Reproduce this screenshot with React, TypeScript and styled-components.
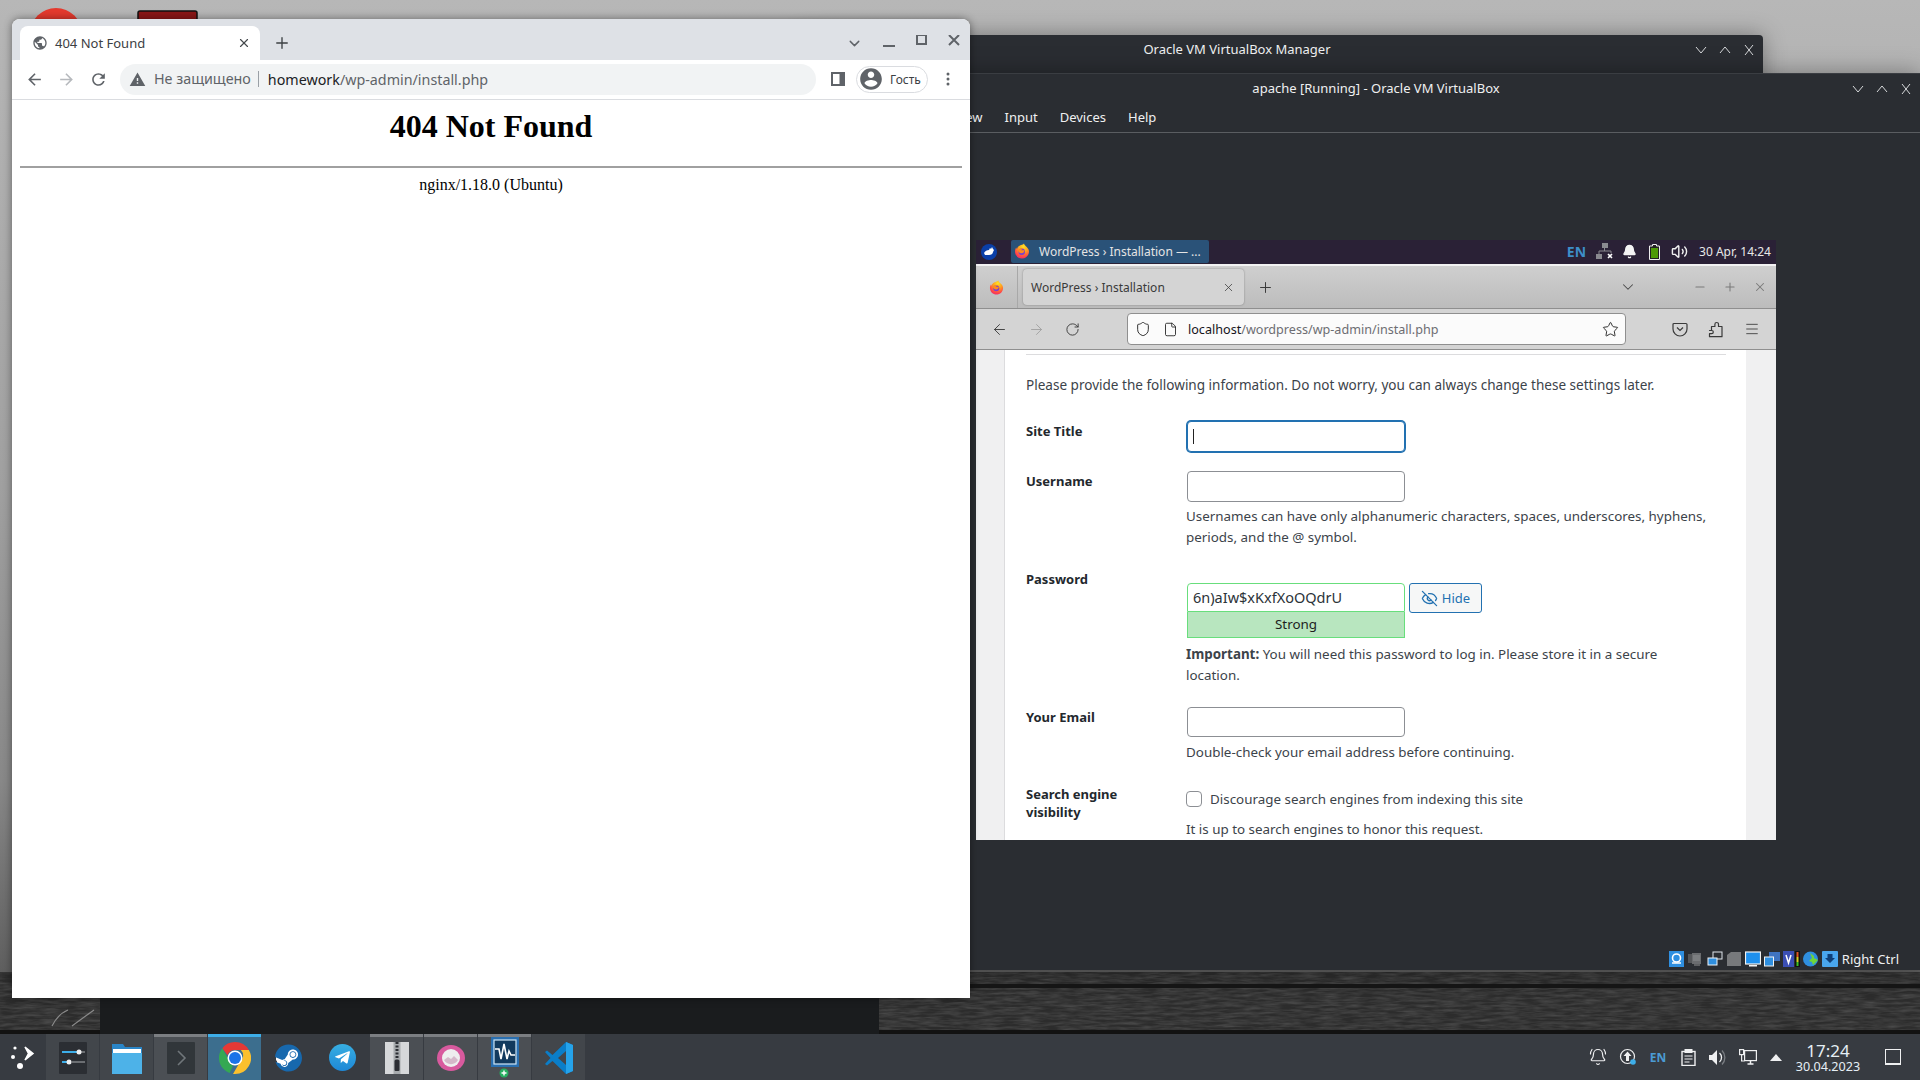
import React from "react";
import styled, { createGlobalStyle } from "styled-components";
import { ArrowLeft, ArrowRight, RotateCw, Shield, File, Star, Menu, EyeOff, X, Plus, ChevronDown, Minus, Bell, Volume2, BellRing } from "lucide-react";
import { FaSteam, FaTelegramPlane } from "react-icons/fa";

const Global = createGlobalStyle`
  html, body { margin: 0; padding: 0; width: 1920px; height: 1080px; overflow: hidden; background: #333; }
  * { box-sizing: border-box; }
`;

const UI = `"Noto Sans", "Liberation Sans", sans-serif`;

const Desktop = styled.div`
  position: relative;
  width: 1920px;
  height: 1080px;
  display: flex;
  flex-direction: column;
  font-family: ${UI};
  overflow: hidden;
`;
const Workspace = styled.div`
  position: relative;
  flex: 1;
`;
const WallpaperArt = styled.svg`
  position: absolute;
  inset: 0;
  display: block;
`;
const BackWindow = styled.div`
  position: absolute;
  left: 100px;
  top: 900px;
  width: 779px;
  height: 134px;
  background: #1a1c1e;
`;

/* ---------- dark KDE windows ---------- */
const ManagerWindow = styled.div`
  position: absolute;
  left: 800px;
  top: 35px;
  width: 963px;
  height: 120px;
  background: #2a2d32;
  border-radius: 4px 4px 0 0;
  box-shadow: 0 0 22px rgba(0, 0, 0, 0.35);
`;
const DarkTitle = styled.div<{ $left?: number; $right?: number; $h: number }>`
  position: relative;
  height: ${(p) => p.$h}px;
  flex: none;
  display: flex;
  align-items: center;
  justify-content: center;
  padding-left: ${(p) => p.$left ?? 0}px;
  padding-right: ${(p) => p.$right ?? 0}px;
  color: #eff0f1;
  font-size: 13px;
`;
const WinButtons = styled.div`
  position: absolute;
  right: 6px;
  top: 7px;
  display: flex;
  gap: 10px;
`;
const VBoxWindow = styled.div`
  position: absolute;
  left: 800px;
  top: 73px;
  width: 1120px;
  height: 897px;
  background: #2a2d32;
  border-top: 1px solid #3a3d42;
  display: flex;
  flex-direction: column;
  box-shadow: 0 0 22px rgba(0, 0, 0, 0.35);
`;
const MenuBar = styled.div`
  height: 31px;
  display: flex;
  align-items: center;
  gap: 22px;
  padding-left: 80px;
  color: #eff0f1;
  font-size: 13px;
  border-bottom: 1px solid #5a5d61;
  flex: none;
  box-sizing: content-box;
`;
const GuestScreen = styled.div`
  width: 800px;
  height: 600px;
  margin: 107px 0 0 176px;
  flex: none;
  display: flex;
  flex-direction: column;
  overflow: hidden;
  font-family: ${UI};
`;
const StatusBar = styled.div`
  margin-top: auto;
  height: 22px;
  padding-right: 21px;
  display: flex;
  align-items: center;
  justify-content: flex-end;
  gap: 3px;
  color: #eff0f1;
  font-size: 13px;
  flex: none;
`;
const StatusBarEnd = styled.span`
  margin-left: 1px;
`;

/* ---------- guest XFCE panel ---------- */
const GuestPanel = styled.div`
  height: 26px;
  background: #2a2136;
  border-bottom: 2px solid #f2f2f2;
  display: flex;
  align-items: flex-start;
  color: #e8e8e8;
  font-size: 12px;
  flex: none;
`;
const PanelMenuIcon = styled.div`
  width: 35px;
  height: 23px;
  display: flex;
  align-items: center;
  padding-left: 5px;
`;
const TaskButton = styled.div`
  width: 198px;
  height: 23px;
  background: #2a5278;
  border-radius: 2px;
  display: flex;
  align-items: center;
  gap: 9px;
  padding: 0 0 1px 3px;
  white-space: nowrap;
  color: #e4e4e4;
`;
const PanelTray = styled.div`
  margin-left: auto;
  height: 23px;
  display: flex;
  align-items: center;
  padding-right: 5px;
`;
const PanelLang = styled.span`
  color: #3d8fc9;
  font-weight: 700;
  font-size: 14px;
  margin-right: 6px;
`;
const PanelGlyph = styled.span`
  width: 25px;
  display: flex;
  justify-content: center;
`;
const PanelClock = styled.span`
  margin-left: 7px;
  font-size: 12px;
  padding-bottom: 1px;
`;

/* ---------- guest firefox ---------- */
const FoxTabs = styled.div`
  height: 43px;
  flex: none;
  background: linear-gradient(#cfcfcf, #bcbcbc);
  border-bottom: 1px solid #8f8f8f;
  display: flex;
  color: #3a3a3a;
  align-items: center;
`;
const FoxLogoCell = styled.div`
  width: 42px;
  height: 100%;
  display: flex;
  align-items: center;
  justify-content: center;
  border-right: 1px solid #a8a8a8;
`;
const FoxTab = styled.div`
  width: 221px;
  height: 36px;
  margin-left: 5px;
  padding: 0 9px 0 8px;
  background: #d4d4d4;
  border-radius: 4px;
  box-shadow: 0 0 2px rgba(0, 0, 0, 0.35);
  display: flex;
  align-items: center;
  justify-content: space-between;
  font-size: 12px;
`;
const FoxTabPlus = styled.div`
  margin-left: 13px;
  display: flex;
`;
const FoxControls = styled.div`
  margin-left: auto;
  display: flex;
  align-items: center;
  padding-right: 9px;
  gap: 16px;
  color: #7a7a7a;
`;
const FoxChevron = styled.span`
  display: flex;
  margin-right: 40px;
  color: #4a4a4a;
`;
const FoxNav = styled.div`
  height: 41px;
  flex: none;
  background: #d4d4d4;
  border-bottom: 1px solid #8f8f8f;
  display: flex;
  align-items: center;
  color: #3a3a3a;
`;
const FoxNavBtn = styled.span<{ $w: number; $dim?: boolean }>`
  width: ${(p) => p.$w}px;
  display: flex;
  justify-content: center;
  color: ${(p) => (p.$dim ? "#a0a0a0" : "#3a3a3a")};
`;
const FoxUrl = styled.div`
  width: 499px;
  height: 32px;
  margin-left: 32px;
  margin-right: 36px;
  background: #fbfbfb;
  border: 1px solid #8f8f8f;
  border-radius: 4px;
  display: flex;
  align-items: center;
  padding: 0 6px 0 7px;
  font-size: 12.6px;
`;
const FoxUrlIcons = styled.span`
  display: flex;
  align-items: center;
  gap: 12px;
  margin-right: 10px;
`;
const FoxHost = styled.span`
  color: #15141a;
`;
const FoxPath = styled.span`
  color: #6d6d72;
`;
const FoxStar = styled.span`
  margin-left: auto;
  display: flex;
`;

/* ---------- wordpress page ---------- */
const WpPage = styled.div`
  flex: 1;
  min-height: 0;
  background: #f0f0f1;
  padding: 0 30px 0 29px;
  overflow: hidden;
`;
const WpCard = styled.div`
  background: #fff;
  height: 100%;
  padding: 4px 20px 0 21px;
  box-shadow: -1px 0 0 #dcdcde;
  color: #3c434a;
  font-size: 13.4px;
  line-height: 21px;
`;
const WpRule = styled.div`
  height: 1px;
  background: #dcdcde;
`;
const WpIntro = styled.p`
  margin: 20px 0 0;
  line-height: 20px;
  font-size: 13.55px;
`;
const FormRow = styled.div<{ $mt: number }>`
  margin-top: ${(p) => p.$mt}px;
  display: grid;
  grid-template-columns: 160px 1fr;
`;
const FieldLabel = styled.div`
  font-weight: 700;
  font-size: 13px;
  color: #23282d;
  line-height: 20px;
`;
const FieldLabelTall = styled(FieldLabel)`
  line-height: 18px;
`;
const TextBox = styled.div<{ $h: number; $focus?: boolean }>`
  width: 218px;
  margin-left: 1px;
  height: ${(p) => p.$h}px;
  border: 1px solid ${(p) => (p.$focus ? "#2271b1" : "#8c8f94")};
  box-shadow: ${(p) => (p.$focus ? "0 0 0 1px #2271b1" : "none")};
  border-radius: 4px;
  background: #fff;
  display: flex;
  align-items: center;
  padding-left: 5px;
`;
const Caret = styled.span`
  width: 1px;
  height: 15px;
  background: #222;
`;
const Hint = styled.div<{ $mt: number }>`
  margin-top: ${(p) => p.$mt}px;
`;
const PasswordLine = styled.div`
  margin-top: 14px;
  margin-left: 1px;
  display: flex;
  gap: 4px;
`;
const PasswordStack = styled.div`
  width: 218px;
`;
const PasswordBox = styled.div`
  height: 29px;
  border: 1px solid #68de7c;
  border-radius: 4px 4px 0 0;
  padding-left: 5px;
  display: flex;
  align-items: center;
  font-size: 14.5px;
  color: #2c3338;
  background: #fff;
`;
const StrengthBar = styled.div`
  height: 26px;
  background: #b8e6bf;
  border: 1px solid #68de7c;
  border-top: none;
  display: flex;
  align-items: center;
  justify-content: center;
  color: #1e1e1e;
`;
const HideButton = styled.div`
  width: 73px;
  height: 30px;
  border: 1px solid #2271b1;
  border-radius: 3px;
  background: #f6f7f7;
  color: #2271b1;
  display: flex;
  align-items: center;
  justify-content: center;
  gap: 4px;
  font-size: 13px;
`;
const CheckLine = styled.div`
  display: flex;
  align-items: center;
  gap: 8px;
  padding-top: 4px;
  height: 24px;
`;
const CheckBox = styled.span`
  width: 16px;
  height: 16px;
  border: 1px solid #8c8f94;
  border-radius: 4px;
  background: #fff;
`;

/* ---------- chrome ---------- */
const ChromeWindow = styled.div`
  position: absolute;
  left: 12px;
  top: 19px;
  width: 958px;
  height: 979px;
  display: flex;
  flex-direction: column;
  background: #fff;
  border-radius: 8px 8px 0 0;
  box-shadow: 0 0 8px rgba(0, 0, 0, 0.45);
`;
const ChromeStrip = styled.div`
  height: 41px;
  flex: none;
  background: #dee1e6;
  border-radius: 8px 8px 0 0;
  padding: 7px 0 0 8px;
  display: flex;
  color: #3c4043;
`;
const ChromeTab = styled.div`
  width: 240px;
  height: 34px;
  background: #fff;
  border-radius: 8px 8px 0 0;
  display: flex;
  align-items: center;
  padding: 0 9px 0 12px;
  font-size: 13px;
  gap: 7px;
`;
const ChromeTabTitle = styled.span`
  flex: 1;
  color: #3c4043;
`;
const ChromePlus = styled.div`
  margin: 0 0 0 13px;
  height: 34px;
  display: flex;
  align-items: center;
`;
const ChromeControls = styled.div`
  margin-left: auto;
  height: 34px;
  display: flex;
  align-items: center;
  color: #5f6368;
`;
const ControlCell = styled.span<{ $w: number }>`
  width: ${(p) => p.$w}px;
  display: flex;
  justify-content: center;
`;
const ChromeBar = styled.div`
  height: 40px;
  flex: none;
  border-bottom: 1px solid #dadce0;
  display: flex;
  align-items: center;
  color: #5f6368;
  padding-bottom: 1px;
`;
const ChromeNavBtn = styled.span<{ $w: number; $dim?: boolean }>`
  width: ${(p) => p.$w}px;
  display: flex;
  justify-content: center;
  color: ${(p) => (p.$dim ? "#b6b9bd" : "#5f6368")};
`;
const Omnibox = styled.div`
  width: 696px;
  height: 31px;
  background: #f1f3f4;
  border-radius: 16px;
  display: flex;
  align-items: center;
  padding-left: 9px;
  font-size: 14.3px;
  color: #5f6368;
`;
const OmniLabel = styled.span`
  margin-left: 8px;
  padding-right: 7px;
  border-right: 1px solid #9aa0a6;
  line-height: 16px;
`;
const OmniHost = styled.span`
  margin-left: 9px;
  color: #202124;
`;
const OmniPath = styled.span`
  color: #5f6368;
`;
const SidePanelIcon = styled.span`
  margin-left: 15px;
  display: flex;
`;
const ProfilePill = styled.div`
  width: 72px;
  height: 27px;
  margin-left: 11px;
  border: 1px solid #dadce0;
  border-radius: 14px;
  display: flex;
  align-items: center;
  gap: 6px;
  padding-left: 1px;
  font-size: 12px;
  color: #3c4043;
`;
const DotsCell = styled.span`
  margin-left: 17px;
  display: flex;
`;
const ChromePage = styled.div`
  flex: 1;
  padding: 8px 8px 0;
  font-family: "Liberation Serif", "Times New Roman", serif;
  color: #000;
  text-align: center;
`;
const NotFoundTitle = styled.h1`
  margin: 0;
  font-size: 32px;
  line-height: 37px;
  font-weight: 700;
`;
const PageRule = styled.hr`
  margin: 21px 0 8px;
  border: none;
  height: 2px;
  background: #a0a0a0;
`;
const ServerLine = styled.div`
  font-size: 16px;
  line-height: 18px;
`;

/* ---------- taskbar ---------- */
const Taskbar = styled.div`
  height: 46px;
  flex: none;
  position: relative;
  background: #373b41;
  display: flex;
  align-items: stretch;
  gap: 1px;
`;
const Launcher = styled.div`
  width: 45px;
  display: flex;
  align-items: center;
  justify-content: center;
`;
type TaskState = "idle" | "hover" | "running" | "active";
const taskBg: Record<TaskState, string> = {
  idle: "transparent",
  hover: "#42464b",
  running: "#4b4f54",
  active: "#3c6e8e",
};
const taskTop: Record<TaskState, string> = {
  idle: "transparent",
  hover: "transparent",
  running: "#7b7e82",
  active: "#3daee9",
};
const TaskItem = styled.div<{ $state: TaskState }>`
  width: 53px;
  background: ${(p) => taskBg[p.$state]};
  border-top: 3px solid ${(p) => taskTop[p.$state]};
  display: flex;
  align-items: center;
  justify-content: center;
  padding-bottom: 2px;
`;
const Tray = styled.div`
  margin-left: auto;
  display: flex;
  align-items: center;
  padding-right: 14px;
  color: #eff0f1;
`;
const TrayCell = styled.span<{ $w: number }>`
  width: ${(p) => p.$w}px;
  display: flex;
  justify-content: center;
  align-items: center;
`;
const TrayLang = styled.span`
  color: #4b9bd4;
  font-size: 12px;
  font-weight: 700;
`;
const Clock = styled.div`
  width: 78px;
  display: flex;
  flex-direction: column;
  align-items: center;
  color: #e6eff5;
  margin-right: 13px;
  padding-top: 1px;
`;
const ClockTime = styled.span`
  font-size: 17px;
  line-height: 18px;
`;
const ClockDate = styled.span`
  font-size: 12.6px;
  line-height: 14px;
`;
const ShowDesktop = styled.span`
  width: 16px;
  height: 16px;
  margin: 0 5px;
  border: 1px solid #eff0f1;
  border-bottom-width: 2px;
`;
const SteamBadge = styled.span`
  width: 27px;
  height: 30px;
  display: flex;
  align-items: center;
  justify-content: center;
  color: #1768ad;
  border-radius: 50%;
  background: radial-gradient(circle, #fff 60%, transparent 62%);
`;
const TelegramBadge = styled.span`
  width: 27px;
  height: 27px;
  border-radius: 50%;
  background: linear-gradient(#37aee2, #1e88d6);
  display: flex;
  align-items: center;
  justify-content: center;
  color: #fff;
`;

/* ---------- drawn icons ---------- */
const M = ({ d, s = 18, c = "currentColor" }: { d: string; s?: number; c?: string }) => (
  <svg width={s} height={s} viewBox="0 0 24 24" fill={c}><path d={d} /></svg>
);
const GLOBE = "M12 2C6.48 2 2 6.48 2 12s4.48 10 10 10 10-4.48 10-10S17.52 2 12 2zm-1 17.93c-3.95-.49-7-3.85-7-7.93 0-.62.08-1.21.21-1.79L9 15v1c0 1.1.9 2 2 2v1.93zm6.9-2.54c-.26-.81-1-1.39-1.9-1.39h-1v-3c0-.55-.45-1-1-1H8v-2h2c.55 0 1-.45 1-1V7h2c1.1 0 2-.9 2-2v-.41c2.93 1.19 5 4.06 5 7.41 0 2.08-.8 3.97-2.1 5.39z";
const BACK = "M20 11H7.83l5.59-5.59L12 4l-8 8 8 8 1.41-1.41L7.83 13H20v-2z";
const FWD = "M12 4l-1.41 1.41L16.17 11H4v2h12.17l-5.58 5.59L12 20l8-8z";
const REFRESH = "M17.65 6.35C16.2 4.9 14.21 4 12 4c-4.42 0-7.99 3.58-7.99 8s3.57 8 7.99 8c3.73 0 6.84-2.55 7.73-6h-2.08c-.82 2.33-3.04 4-5.65 4-3.31 0-6-2.69-6-6s2.69-6 6-6c1.66 0 3.14.69 4.22 1.78L13 11h7V4l-2.35 2.35z";
const WARN = "M1 21h22L12 2 1 21zm12-3h-2v-2h2v2zm0-4h-2v-4h2v4z";
const ACCOUNT = "M12 2C6.48 2 2 6.48 2 12s4.48 10 10 10 10-4.48 10-10S17.52 2 12 2zm0 3c1.66 0 3 1.34 3 3s-1.34 3-3 3-3-1.34-3-3 1.34-3 3-3zm0 14.2c-2.5 0-4.71-1.28-6-3.22.03-1.99 4-3.08 6-3.08 1.99 0 5.97 1.09 6 3.08-1.29 1.94-3.5 3.22-6 3.22z";

const DarkBtns = () => (
  <svg width="62" height="16" viewBox="0 0 62 16" fill="none" stroke="#d8dadc" strokeWidth="1">
    <path d="M1 5l5 6 5-6" />
    <path d="M25 11l5-6 5 6" />
    <path d="M50 3l8 10M58 3l-8 10" />
  </svg>
);

const FirefoxLogo = ({ s = 16 }: { s?: number }) => (
  <svg width={s} height={s} viewBox="0 0 32 32">
    <defs>
      <radialGradient id={`ff${s}`} cx="0.6" cy="0.2" r="0.95">
        <stop offset="0" stopColor="#ffe226" />
        <stop offset="0.4" stopColor="#ff9a1f" />
        <stop offset="0.75" stopColor="#ff3d4f" />
        <stop offset="1" stopColor="#d62a8c" />
      </radialGradient>
    </defs>
    <path d="M20 1c.5 3 3 4.500 5.500 7 3 3 4.500 6 4.500 9 0 8-6.300 14-14 14S2 25 2 17c0-3 1-6 2.500-8 0 1 .5 2 1.500 3 .5-3 2.500-5 5-6.500C15 3.500 18 3 20 1z" fill={`url(#ff${s})`} />
    <circle cx="15.500" cy="17.500" r="6.500" fill="#7a3fcf" />
    <path d="M8 15c3-4 8-5 12-3-3 0-5 1-5.500 2.500 3 .5 5 0 6.500-.5 0 4-3 6.500-6 6.500-3.500 0-6-2.500-7-5.500z" fill="#ff8c1a" />
  </svg>
);

const WhiskerIcon = () => (
  <svg width="16" height="16" viewBox="0 0 16 16">
    <circle cx="8" cy="8" r="8" fill="#0a3fa8" />
    <path d="M3 9c1-2 3-3 5-3l1-2 1 1 1-2 1 2 1 1-1 2c0 2-2 3-4 3H6L4 11z" fill="#fff" />
  </svg>
);

const ChromeLogo = () => (
  <svg width="32" height="32" viewBox="0 0 32 32">
    <path d="M16 0a16 16 0 0 1 13.860 8H16a8 8 0 0 0-7.500 5.200L3.300 6.200A16 16 0 0 1 16 0z" fill="#e53935" />
    <path d="M1.400 9.200l1.900-3L9.300 17a8 8 0 0 0 4.700 6.700L10.700 31A16 16 0 0 1 1.400 9.200z" fill="#34a853" />
    <path d="M29.860 8A16 16 0 0 1 16 32h-2l6.900-12a8 8 0 0 0 1-12z" fill="#fbc02d" />
    <circle cx="16" cy="16" r="7.500" fill="#fff" />
    <circle cx="16" cy="16" r="6" fill="#1a73e8" />
  </svg>
);

const SettingsIcon = () => (
  <svg width="28" height="32" viewBox="0 0 28 32">
    <rect width="28" height="32" rx="1" fill="#2b2e33" />
    <path d="M3 10h17" stroke="#3daee9" strokeWidth="2" />
    <path d="M20 10h6M13 20h13" stroke="#6b6e72" strokeWidth="2" />
    <path d="M3 20h8" stroke="#3daee9" strokeWidth="2" />
    <circle cx="20" cy="10" r="2.500" fill="#eff0f1" />
    <circle cx="10" cy="20" r="2.500" fill="#eff0f1" />
  </svg>
);
const FolderIcon = () => (
  <svg width="30" height="32" viewBox="0 0 30 32">
    <path d="M0 2h11l2 3h17v27H0z" fill="#2a85c7" />
    <rect x="1" y="7" width="28" height="5" fill="#fff" />
    <rect y="11" width="30" height="21" fill="#4db2e8" />
  </svg>
);
const KonsoleIcon = () => (
  <svg width="28" height="32" viewBox="0 0 28 32">
    <rect width="28" height="32" rx="1" fill="#31363a" />
    <path d="M11 9l7 7-7 7" fill="none" stroke="#70767a" strokeWidth="1.600" />
  </svg>
);
const ArchiveIcon = () => (
  <svg width="24" height="32" viewBox="0 0 24 32">
    <rect width="24" height="32" fill="#d6d8da" />
    <rect x="8.500" width="7" height="32" fill="#a7abae" />
    <path d="M12 0v19" stroke="#2b2e33" strokeWidth="3" strokeDasharray="2 1.500" />
    <rect x="9.500" y="18" width="5" height="11" rx="1" fill="#2b2e33" />
  </svg>
);
const PinkIcon = () => (
  <svg width="28" height="26" viewBox="0 0 28 26">
    <ellipse cx="14" cy="13" rx="14" ry="13" fill="#d85a9e" />
    <circle cx="14" cy="13" r="9" fill="#eee" />
    <path d="M7 15l4-3 3 2 3-3 4 4a8 8 0 0 1-14 0z" fill="#d5b8c9" />
  </svg>
);
const WmIcon = () => (
  <svg width="28" height="42" viewBox="0 0 28 42">
    <rect width="28" height="30" fill="#2a6fb0" />
    <rect x="3" y="3" width="22" height="24" fill="#123a5e" stroke="#cfe6f7" strokeWidth="1.200" />
    <path d="M4 12h4l2 10 3-15 3 15 2-8 2 4h4" fill="none" stroke="#fff" strokeWidth="1.600" />
    <circle cx="13" cy="36" r="4.500" fill="#27ae60" />
    <path d="M13 33.500v5M10.500 36h5" stroke="#fff" strokeWidth="1.400" />
  </svg>
);
const VSCodeIcon = () => (
  <svg width="28" height="32" viewBox="0 0 28 32">
    <path d="M21 0L7.500 13 2 8.500 0 10l5.500 6L0 22l2 1.500L7.500 19 21 32l7-3V3z" fill="#0a7ec9" />
    <path d="M21 0l7 3v26l-7 3z" fill="#25a3ea" />
    <path d="M21 9l-8 7 8 7z" fill="#42464b" />
  </svg>
);
const LauncherIcon = () => (
  <svg width="30" height="30" viewBox="0 0 30 30" fill="#fff">
    <circle cx="5" cy="15" r="2" />
    <circle cx="7" cy="6" r="1.600" />
    <circle cx="12" cy="24" r="3" />
    <path d="M17 5l8 6.500-8 6.500 3.500-6.500z" stroke="#fff" strokeWidth="1.500" />
  </svg>
);
const PocketIcon = () => (
  <svg width="16" height="16" viewBox="0 0 16 16" fill="none" stroke="#3a3a3a" strokeWidth="1.200">
    <path d="M2 2.500h12a1 1 0 0 1 1 1V8a7 7 0 0 1-14 0V3.500a1 1 0 0 1 1-1z" />
    <path d="M5 6.500l3 3 3-3" />
  </svg>
);
const ExtensionIcon = () => (
  <svg width="16" height="17" viewBox="0 0 16 17" fill="none" stroke="#3a3a3a" strokeWidth="1.200" strokeLinejoin="round">
    <path d="M1.500 9.500h2.200a1.600 1.600 0 0 1 0 3.200H1.500v3h12.500V5.500H10.500V3.300a1.800 1.800 0 0 0-3.600 0v2.200H3.500v4z" />
  </svg>
);
const NetOffIcon = () => (
  <svg width="17" height="17" viewBox="0 0 17 17" fill="#8a8a90">
    <rect x="6" y="0" width="6" height="5" />
    <rect x="0" y="11" width="6" height="5" />
    <path d="M8.500 5v3M3 11V8h12v2" fill="none" stroke="#8a8a90" />
    <path d="M12 11l4 4M16 11l-4 4" stroke="#fff" strokeWidth="1.600" />
  </svg>
);
const BatteryIcon = () => (
  <svg width="11" height="16" viewBox="0 0 11 16">
    <path d="M3.500.5h4v1.500h3v13.500H.5V2h3z" fill="#222" stroke="#eee" />
    <rect x="2" y="4" width="7" height="10" fill="#4e9a06" />
  </svg>
);
const AlarmIcon = () => <BellRing size={18} strokeWidth={1.6} />;
const UpdateIcon = () => (
  <svg width="18" height="18" viewBox="0 0 18 18" fill="none">
    <circle cx="8.500" cy="8.500" r="7" stroke="#eff0f1" strokeWidth="1.200" />
    <path d="M8.500 3.500l4 4.500H10v5H7V8H4.500z" fill="#eff0f1" />
    <circle cx="14" cy="14" r="2.800" fill="#3daee9" />
  </svg>
);
const ClipboardIcon = () => (
  <svg width="15" height="17" viewBox="0 0 15 17" fill="none" stroke="#eff0f1">
    <rect x="1" y="2.500" width="13" height="14" fill="#373b41" strokeWidth="1.400" />
    <rect x="3.500" y="0" width="8" height="4" fill="#eff0f1" stroke="none" />
    <path d="M3.500 7h8M3.500 10h8M3.500 13h5" strokeWidth="1.200" />
  </svg>
);
const SpeakerIcon = () => (
  <svg width="18" height="17" viewBox="0 0 18 17" fill="none">
    <path d="M0 6h3l5-5v15l-5-5H0z" fill="#eff0f1" />
    <path d="M10.500 4a6 6 0 0 1 0 9" stroke="#eff0f1" strokeWidth="1.300" />
    <path d="M13 1.500a10 10 0 0 1 0 14" stroke="#7a7e83" strokeWidth="1.300" />
  </svg>
);
const NetworkIcon = () => (
  <svg width="18" height="17" viewBox="0 0 18 17" fill="none" stroke="#eff0f1" strokeWidth="1.200">
    <rect x="0.600" y="0.600" width="4" height="5" />
    <path d="M2.600 5.600V12h3" />
    <rect x="5.600" y="1.600" width="11.800" height="10" />
    <path d="M11.500 11.600v3M8.500 15h6" strokeWidth="1.500" />
  </svg>
);
const UpTriangle = () => (
  <svg width="12" height="7" viewBox="0 0 12 7"><path d="M0 7l6-7 6 7z" fill="#eff0f1" /></svg>
);

const Vb = ({ k }: { k: number }) => {
  const common = { width: 16, height: 16, viewBox: "0 0 16 16" };
  if (k === 0)
    return (
      <svg {...common}>
        <rect width="15" height="16" fill="#2f8fe0" />
        <circle cx="7.500" cy="7" r="4" fill="none" stroke="#fff" strokeWidth="1.600" />
        <path d="M3 12h9" stroke="#fff" strokeWidth="1.500" />
      </svg>
    );
  if (k === 1)
    return (
      <svg {...common}>
        <rect x="4" y="2" width="9" height="11" fill="#6a6c6f" />
        <rect x="0" y="3" width="4" height="9" fill="#55575a" />
        <path d="M5 5h7M5 7h7M5 9h7" stroke="#8e9093" />
        <rect x="6" y="13" width="6" height="2" fill="#5d5f62" />
      </svg>
    );
  if (k === 2)
    return (
      <svg {...common}>
        <rect x="6" y="1" width="9" height="7" fill="#2a2d32" stroke="#dfe6ec" />
        <rect x="1" y="7" width="9" height="7" fill="#2f8fe0" stroke="#f0f4f7" />
      </svg>
    );
  if (k === 3)
    return (
      <svg {...common}>
        <path d="M1 4l4-3h10v14H1z" fill="#77797c" />
      </svg>
    );
  if (k === 4)
    return (
      <svg {...common}>
        <rect x="0.500" y="1" width="15" height="12" fill="#1e90ee" stroke="#f2f2f2" strokeWidth="1.200" />
        <rect x="4" y="14" width="8" height="1.500" fill="#f2f2f2" />
      </svg>
    );
  if (k === 5)
    return (
      <svg {...common}>
        <rect x="5" y="1" width="11" height="9" fill="#3f73c0" />
        <rect x="0.500" y="6" width="9" height="9" fill="#2f8fe0" stroke="#f2f2f2" />
      </svg>
    );
  if (k === 6)
    return (
      <svg width="17" height="16" viewBox="0 0 17 16">
        <rect width="11" height="16" fill="#3b4fb5" />
        <path d="M3 4l2.500 8 2.500-8" fill="none" stroke="#fff" strokeWidth="1.500" />
        <rect x="12" y="0" width="5" height="16" fill="#111" />
        <rect x="13.500" y="1" width="2" height="5" fill="#e0531f" />
        <rect x="13.500" y="6" width="2" height="5" fill="#d8cf22" />
        <rect x="13.500" y="11" width="2" height="4" fill="#39c124" />
      </svg>
    );
  if (k === 7)
    return (
      <svg {...common}>
        <circle cx="7.500" cy="8" r="7.500" fill="#2f8fe0" />
        <path d="M7 2l4 3v2l4 2-5 5-1-3-3-1 3-3z" fill="#6fd53a" />
      </svg>
    );
  return (
    <svg {...common}>
      <rect width="16" height="16" rx="1" fill="#49a6ee" />
      <path d="M5.500 3h5v4H13l-5 5-5-5h2.500z" fill="#0e3f78" />
    </svg>
  );
};

export default function App() {
  return (
    <Desktop>
      <Global />
      <Workspace>
        <WallpaperArt width="1920" height="1034" viewBox="0 0 1920 1034">
          <defs>
            <linearGradient id="wallGray" x1="0" y1="0" x2="0" y2="1">
              <stop offset="0" stopColor="#b7b7b7" />
              <stop offset="0.5" stopColor="#a0a0a0" />
              <stop offset="0.8" stopColor="#888" />
              <stop offset="1" stopColor="#5e5e5e" />
            </linearGradient>
            <filter id="grain" x="0" y="0" width="100%" height="100%">
              <feTurbulence type="fractalNoise" baseFrequency="0.05 0.4" numOctaves="3" seed="4" />
              <feColorMatrix values="0 0 0 0 0.6  0 0 0 0 0.6  0 0 0 0 0.6  1 0 0 0 -0.300" />
            </filter>
          </defs>
          <rect width="1920" height="975" fill="url(#wallGray)" />
          <rect y="972" width="1920" height="62" fill="#2c2c2c" />
          <rect y="972" width="1920" height="62" filter="url(#grain)" opacity="0.32" />
          <rect x="970" y="984" width="950" height="4" fill="#161616" />
          <rect y="1030" width="1920" height="4" fill="#121212" />
          <circle cx="56" cy="34" r="26" fill="#e53a2e" />
          <rect x="138" y="11" width="59" height="30" rx="2" fill="#8b1616" stroke="#111" strokeWidth="1.500" />
          <path d="M52 1026q6-12 16-16M72 1026q8-6 22-16" stroke="#8a8a8a" strokeWidth="1.200" fill="none" />
        </WallpaperArt>
        <BackWindow />
        <ManagerWindow>
          <DarkTitle $h={28} $right={89}>Oracle VM VirtualBox Manager</DarkTitle>
          <WinButtons><DarkBtns /></WinButtons>
        </ManagerWindow>
        <VBoxWindow>
          <DarkTitle $h={27} $left={32}>apache [Running] - Oracle VM VirtualBox</DarkTitle>
          <WinButtons><DarkBtns /></WinButtons>
          <MenuBar>
            <span>Machine</span>
            <span>View</span>
            <span>Input</span>
            <span>Devices</span>
            <span>Help</span>
          </MenuBar>
          <GuestScreen>
            <GuestPanel>
              <PanelMenuIcon><WhiskerIcon /></PanelMenuIcon>
              <TaskButton><FirefoxLogo s={16} />WordPress › Installation — ...</TaskButton>
              <PanelTray>
                <PanelLang>EN</PanelLang>
                <PanelGlyph><NetOffIcon /></PanelGlyph>
                <PanelGlyph><Bell size={15} fill="#f4f4f4" color="#f4f4f4" /></PanelGlyph>
                <PanelGlyph><BatteryIcon /></PanelGlyph>
                <PanelGlyph><Volume2 size={17} color="#f0f0f0" /></PanelGlyph>
                <PanelClock>30 Apr, 14:24</PanelClock>
              </PanelTray>
            </GuestPanel>
            <FoxTabs>
              <FoxLogoCell><FirefoxLogo s={15} /></FoxLogoCell>
              <FoxTab>
                WordPress › Installation
                <X size={13} strokeWidth={1.4} />
              </FoxTab>
              <FoxTabPlus><Plus size={17} strokeWidth={1.4} /></FoxTabPlus>
              <FoxControls>
                <FoxChevron><ChevronDown size={18} strokeWidth={1.4} /></FoxChevron>
                <Minus size={14} strokeWidth={1.8} />
                <Plus size={14} strokeWidth={1.8} />
                <X size={14} strokeWidth={1.8} />
              </FoxControls>
            </FoxTabs>
            <FoxNav>
              <FoxNavBtn $w={47}><ArrowLeft size={17} strokeWidth={1.3} /></FoxNavBtn>
              <FoxNavBtn $w={26} $dim><ArrowRight size={17} strokeWidth={1.3} /></FoxNavBtn>
              <FoxNavBtn $w={46}><RotateCw size={15} strokeWidth={1.5} /></FoxNavBtn>
              <FoxUrl>
                <FoxUrlIcons>
                  <Shield size={16} strokeWidth={1.4} color="#222" />
                  <File size={15} strokeWidth={1.4} color="#222" />
                </FoxUrlIcons>
                <FoxHost>localhost</FoxHost>
                <FoxPath>/wordpress/wp-admin/install.php</FoxPath>
                <FoxStar><Star size={17} strokeWidth={1.3} color="#222" /></FoxStar>
              </FoxUrl>
              <FoxNavBtn $w={36}><PocketIcon /></FoxNavBtn>
              <FoxNavBtn $w={36}><ExtensionIcon /></FoxNavBtn>
              <FoxNavBtn $w={36}><Menu size={16} strokeWidth={1.3} /></FoxNavBtn>
            </FoxNav>
            <WpPage>
              <WpCard>
                <WpRule />
                <WpIntro>Please provide the following information. Do not worry, you can always change these settings later.</WpIntro>
                <FormRow $mt={26}>
                  <FieldLabel>Site Title</FieldLabel>
                  <TextBox $h={31} $focus><Caret /></TextBox>
                </FormRow>
                <FormRow $mt={19}>
                  <FieldLabel>Username</FieldLabel>
                  <div>
                    <TextBox $h={31} />
                    <Hint $mt={4}>Usernames can have only alphanumeric characters, spaces, underscores, hyphens, periods, and the @ symbol.</Hint>
                  </div>
                </FormRow>
                <FormRow $mt={21}>
                  <FieldLabel>Password</FieldLabel>
                  <div>
                    <PasswordLine>
                      <PasswordStack>
                        <PasswordBox>6n)aIw$xKxfXoOQdrU</PasswordBox>
                        <StrengthBar>Strong</StrengthBar>
                      </PasswordStack>
                      <HideButton><EyeOff size={17} strokeWidth={1.8} />Hide</HideButton>
                    </PasswordLine>
                    <Hint $mt={6}><b>Important:</b> You will need this password to log in. Please store it in a secure<br />location.</Hint>
                  </div>
                </FormRow>
                <FormRow $mt={21}>
                  <FieldLabel>Your Email</FieldLabel>
                  <div>
                    <TextBox $h={30} />
                    <Hint $mt={5}>Double-check your email address before continuing.</Hint>
                  </div>
                </FormRow>
                <FormRow $mt={22}>
                  <FieldLabelTall>Search engine<br />visibility</FieldLabelTall>
                  <div>
                    <CheckLine><CheckBox />Discourage search engines from indexing this site</CheckLine>
                    <Hint $mt={10}>It is up to search engines to honor this request.</Hint>
                  </div>
                </FormRow>
              </WpCard>
            </WpPage>
          </GuestScreen>
          <StatusBar>
            <Vb k={0} /><Vb k={1} /><Vb k={2} /><Vb k={3} /><Vb k={4} /><Vb k={5} /><Vb k={6} /><Vb k={7} /><Vb k={8} />
            <StatusBarEnd>Right Ctrl</StatusBarEnd>
          </StatusBar>
        </VBoxWindow>
        <ChromeWindow>
          <ChromeStrip>
            <ChromeTab>
              <M d={GLOBE} s={16} c="#5f6368" />
              <ChromeTabTitle>404 Not Found</ChromeTabTitle>
              <X size={14} strokeWidth={2} color="#45494d" />
            </ChromeTab>
            <ChromePlus><Plus size={18} strokeWidth={1.8} color="#3c4043" /></ChromePlus>
            <ChromeControls>
              <ControlCell $w={36}><ChevronDown size={17} strokeWidth={2} /></ControlCell>
              <ControlCell $w={34}>
                <svg width="12" height="16" viewBox="0 0 12 16"><rect y="10" width="12" height="2" fill="#5f6368" /></svg>
              </ControlCell>
              <ControlCell $w={32}>
                <svg width="12" height="16" viewBox="0 0 12 16"><rect x="1" y="0" width="9" height="9" fill="none" stroke="#5f6368" strokeWidth="2" /></svg>
              </ControlCell>
              <ControlCell $w={32}>
                <svg width="12" height="16" viewBox="0 0 12 16"><path d="M1 0l10 10M11 0l-10 10" stroke="#5f6368" strokeWidth="2" /></svg>
              </ControlCell>
            </ChromeControls>
          </ChromeStrip>
          <ChromeBar>
            <ChromeNavBtn $w={44}><M d={BACK} s={19} /></ChromeNavBtn>
            <ChromeNavBtn $w={20} $dim><M d={FWD} s={19} /></ChromeNavBtn>
            <ChromeNavBtn $w={44}><M d={REFRESH} s={19} /></ChromeNavBtn>
            <Omnibox>
              <M d={WARN} s={17} c="#5f6368" />
              <OmniLabel>Не защищено</OmniLabel>
              <OmniHost>homework</OmniHost>
              <OmniPath>/wp-admin/install.php</OmniPath>
            </Omnibox>
            <SidePanelIcon>
              <svg width="14" height="14" viewBox="0 0 14 14">
                <path d="M0 0h14v14H0zM2 2v10h6.500V2z" fill="#5f6368" fillRule="evenodd" />
              </svg>
            </SidePanelIcon>
            <ProfilePill>
              <M d={ACCOUNT} s={26} c="#5f6368" />
              Гость
            </ProfilePill>
            <DotsCell>
              <svg width="6" height="14" viewBox="0 0 6 14" fill="#5f6368">
                <circle cx="3" cy="2" r="1.500" /><circle cx="3" cy="7" r="1.500" /><circle cx="3" cy="12" r="1.500" />
              </svg>
            </DotsCell>
          </ChromeBar>
          <ChromePage>
            <NotFoundTitle>404 Not Found</NotFoundTitle>
            <PageRule />
            <ServerLine>nginx/1.18.0 (Ubuntu)</ServerLine>
          </ChromePage>
        </ChromeWindow>
      </Workspace>
      <Taskbar>
        <Launcher><LauncherIcon /></Launcher>
        <TaskItem $state="hover"><SettingsIcon /></TaskItem>
        <TaskItem $state="hover"><FolderIcon /></TaskItem>
        <TaskItem $state="running"><KonsoleIcon /></TaskItem>
        <TaskItem $state="active"><ChromeLogo /></TaskItem>
        <TaskItem $state="idle"><SteamBadge><FaSteam size={28} /></SteamBadge></TaskItem>
        <TaskItem $state="idle"><TelegramBadge><FaTelegramPlane size={17} /></TelegramBadge></TaskItem>
        <TaskItem $state="running"><ArchiveIcon /></TaskItem>
        <TaskItem $state="running"><PinkIcon /></TaskItem>
        <TaskItem $state="running"><WmIcon /></TaskItem>
        <TaskItem $state="hover"><VSCodeIcon /></TaskItem>
        <Tray>
          <TrayCell $w={30}><AlarmIcon /></TrayCell>
          <TrayCell $w={30}><UpdateIcon /></TrayCell>
          <TrayCell $w={30}><TrayLang>EN</TrayLang></TrayCell>
          <TrayCell $w={30}><ClipboardIcon /></TrayCell>
          <TrayCell $w={30}><SpeakerIcon /></TrayCell>
          <TrayCell $w={30}><NetworkIcon /></TrayCell>
          <TrayCell $w={26}><UpTriangle /></TrayCell>
          <Clock>
            <ClockTime>17:24</ClockTime>
            <ClockDate>30.04.2023</ClockDate>
          </Clock>
          <ShowDesktop />
        </Tray>
      </Taskbar>
    </Desktop>
  );
}
